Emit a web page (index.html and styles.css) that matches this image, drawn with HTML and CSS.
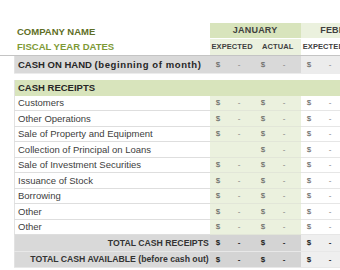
FILE: index.html
```html
<!DOCTYPE html>
<html>
<head>
<meta charset="utf-8">
<link rel="stylesheet" href="styles.css">
</head>
<body>
<div class="sheet">
  <table class="grid head">
    <colgroup><col class="c-label"><col class="c-num"><col class="c-num2"><col class="c-num"><col class="c-num"></colgroup>
    <tr class="h1">
      <td class="title company">COMPANY NAME</td>
      <td colspan="2" class="month jan">JANUARY</td>
      <td colspan="2" class="month feb">FEBRUARY</td>
    </tr>
    <tr class="h2">
      <td class="title fiscal">FISCAL YEAR DATES</td>
      <td class="sub jan">EXPECTED</td>
      <td class="sub jan">ACTUAL</td>
      <td class="sub feb">EXPECTED</td>
      <td class="sub feb">ACTUAL</td>
    </tr>
  </table>
  <div class="rule"></div>
  <table class="grid body">
    <colgroup><col class="c-label"><col class="c-num"><col class="c-num2"><col class="c-num"><col class="c-num"></colgroup>
    <tr class="onhand">
      <td class="label bold">CASH ON HAND <span class="paren">(beginning of month)</span></td>
      <td class="v"><span>$</span><span>-</span></td>
      <td class="v"><span>$</span><span>-</span></td>
      <td class="v fv"><span>$</span><span>-</span></td>
      <td class="v fv"><span>$</span><span>-</span></td>
    </tr>
    <tr class="gap"><td colspan="5"></td></tr>
    <tr class="section">
      <td class="label bold">CASH RECEIPTS</td>
      <td></td><td></td><td></td><td></td>
    </tr>
    <tr class="row"><td class="label">Customers</td><td class="v"><span>$</span><span>-</span></td><td class="v"><span>$</span><span>-</span></td><td class="v fv"><span>$</span><span>-</span></td><td class="v fv"><span>$</span><span>-</span></td></tr>
    <tr class="row"><td class="label">Other Operations</td><td class="v"><span>$</span><span>-</span></td><td class="v"><span>$</span><span>-</span></td><td class="v fv"><span>$</span><span>-</span></td><td class="v fv"><span>$</span><span>-</span></td></tr>
    <tr class="row"><td class="label">Sale of Property and Equipment</td><td class="v"><span>$</span><span>-</span></td><td class="v"><span>$</span><span>-</span></td><td class="v fv"><span>$</span><span>-</span></td><td class="v fv"><span>$</span><span>-</span></td></tr>
    <tr class="row"><td class="label">Collection of Principal on Loans</td><td class="v"></td><td class="v"><span>$</span><span>-</span></td><td class="v fv"><span>$</span><span>-</span></td><td class="v fv"><span>$</span><span>-</span></td></tr>
    <tr class="row"><td class="label">Sale of Investment Securities</td><td class="v"><span>$</span><span>-</span></td><td class="v"><span>$</span><span>-</span></td><td class="v fv"><span>$</span><span>-</span></td><td class="v fv"><span>$</span><span>-</span></td></tr>
    <tr class="row"><td class="label">Issuance of Stock</td><td class="v"><span>$</span><span>-</span></td><td class="v"><span>$</span><span>-</span></td><td class="v fv"><span>$</span><span>-</span></td><td class="v fv"><span>$</span><span>-</span></td></tr>
    <tr class="row"><td class="label">Borrowing</td><td class="v"><span>$</span><span>-</span></td><td class="v"><span>$</span><span>-</span></td><td class="v fv"><span>$</span><span>-</span></td><td class="v fv"><span>$</span><span>-</span></td></tr>
    <tr class="row"><td class="label">Other</td><td class="v"><span>$</span><span>-</span></td><td class="v"><span>$</span><span>-</span></td><td class="v fv"><span>$</span><span>-</span></td><td class="v fv"><span>$</span><span>-</span></td></tr>
    <tr class="row"><td class="label">Other</td><td class="v"><span>$</span><span>-</span></td><td class="v"><span>$</span><span>-</span></td><td class="v fv"><span>$</span><span>-</span></td><td class="v fv"><span>$</span><span>-</span></td></tr>
    <tr class="total"><td class="label tl">TOTAL CASH RECEIPTS</td><td class="v"><span>$</span><span>-</span></td><td class="v"><span>$</span><span>-</span></td><td class="v fv"><span>$</span><span>-</span></td><td class="v fv"><span>$</span><span>-</span></td></tr>
    <tr class="total"><td class="label tl">TOTAL CASH AVAILABLE (before cash out)</td><td class="v"><span>$</span><span>-</span></td><td class="v"><span>$</span><span>-</span></td><td class="v fv"><span>$</span><span>-</span></td><td class="v fv"><span>$</span><span>-</span></td></tr>
  </table>
</div>
</body>
</html>
```

FILE: styles.css
```css
html, body {
  margin: 0;
  padding: 0;
  background: #ffffff;
}
body {
  width: 340px;
  height: 270px;
  overflow: hidden;
  font-family: "Liberation Sans", Arial, sans-serif;
  color: #404040;
}
.sheet {
  padding-top: 23px;
  width: 340px;
  overflow: hidden;
}
.grid {
  border-collapse: collapse;
  table-layout: fixed;
  width: 377px;
  margin-left: 14px;
}
.c-label { width: 195px; }
.c-num { width: 45px; }
.c-num2 { width: 46px; }
td {
  padding: 0;
  white-space: nowrap;
  overflow: hidden;
}
/* header */
.h1 td { height: 14px; }
.h2 td { height: 16px; }
.title {
  font-weight: bold;
  font-size: 9.5px;
  padding-left: 3px;
}
.company { color: #5f6f26; padding-top: 1px; }
.fiscal { color: #7e9a36; }
.month {
  text-align: center;
  font-weight: bold;
  font-size: 9px;
  letter-spacing: 0.2px;
}
.month.jan { background: #d8e4bc; }
.month.feb { background: #ebf1de; }
.h1 .month { border-bottom: 1px solid #ffffff; }
.sub {
  text-align: center;
  font-weight: bold;
  font-size: 7.5px;
  letter-spacing: 0.1px;
}
.sub.jan { background: #ebf1de; }
.sub.feb { background: #ffffff; }
.rule {
  height: 1px;
  background: #c4c4c4;
}
/* body */
.label {
  font-size: 9.5px;
  padding-left: 3px;
  border-left: 1px solid #e2e2e2;
}
.bold { font-weight: bold; font-size: 9.5px; color: #262626; }
.paren { letter-spacing: 0.6px; }
.onhand td { height: 17px; background: #d9d9d9; border-bottom: 1px solid #ececec; }
.onhand td.fv { background: #ececec; }
.gap td { height: 6px; }
.section td { height: 16px; background: #d8e4bc; }
.row td { height: 14.5px; border-bottom: 1px solid #dedede; }
.row td.v { background: #ebf1de; border-bottom-color: #e2e6d8; }
.row td.fv { background: #ffffff; border-bottom-color: #e6e6e6; }
.v {
  font-size: 8px;
  color: #7a7a7a;
  padding-left: 6px;
}
.v span:first-child { display: inline-block; width: 22px; color: #5a5a5a; }
.total td { height: 15.5px; background: #d9d9d9; border-bottom: 1px solid #e8e8e8; }
.total td.v { background: #d4d4d4; color: #222222; font-weight: bold; }
.total td.v span:first-child { color: #222222; }
.total td.fv { background: #efefef; }
.tl {
  text-align: right;
  font-weight: bold;
  font-size: 8.7px;
  padding-right: 1px;
  color: #333333;
}
```
